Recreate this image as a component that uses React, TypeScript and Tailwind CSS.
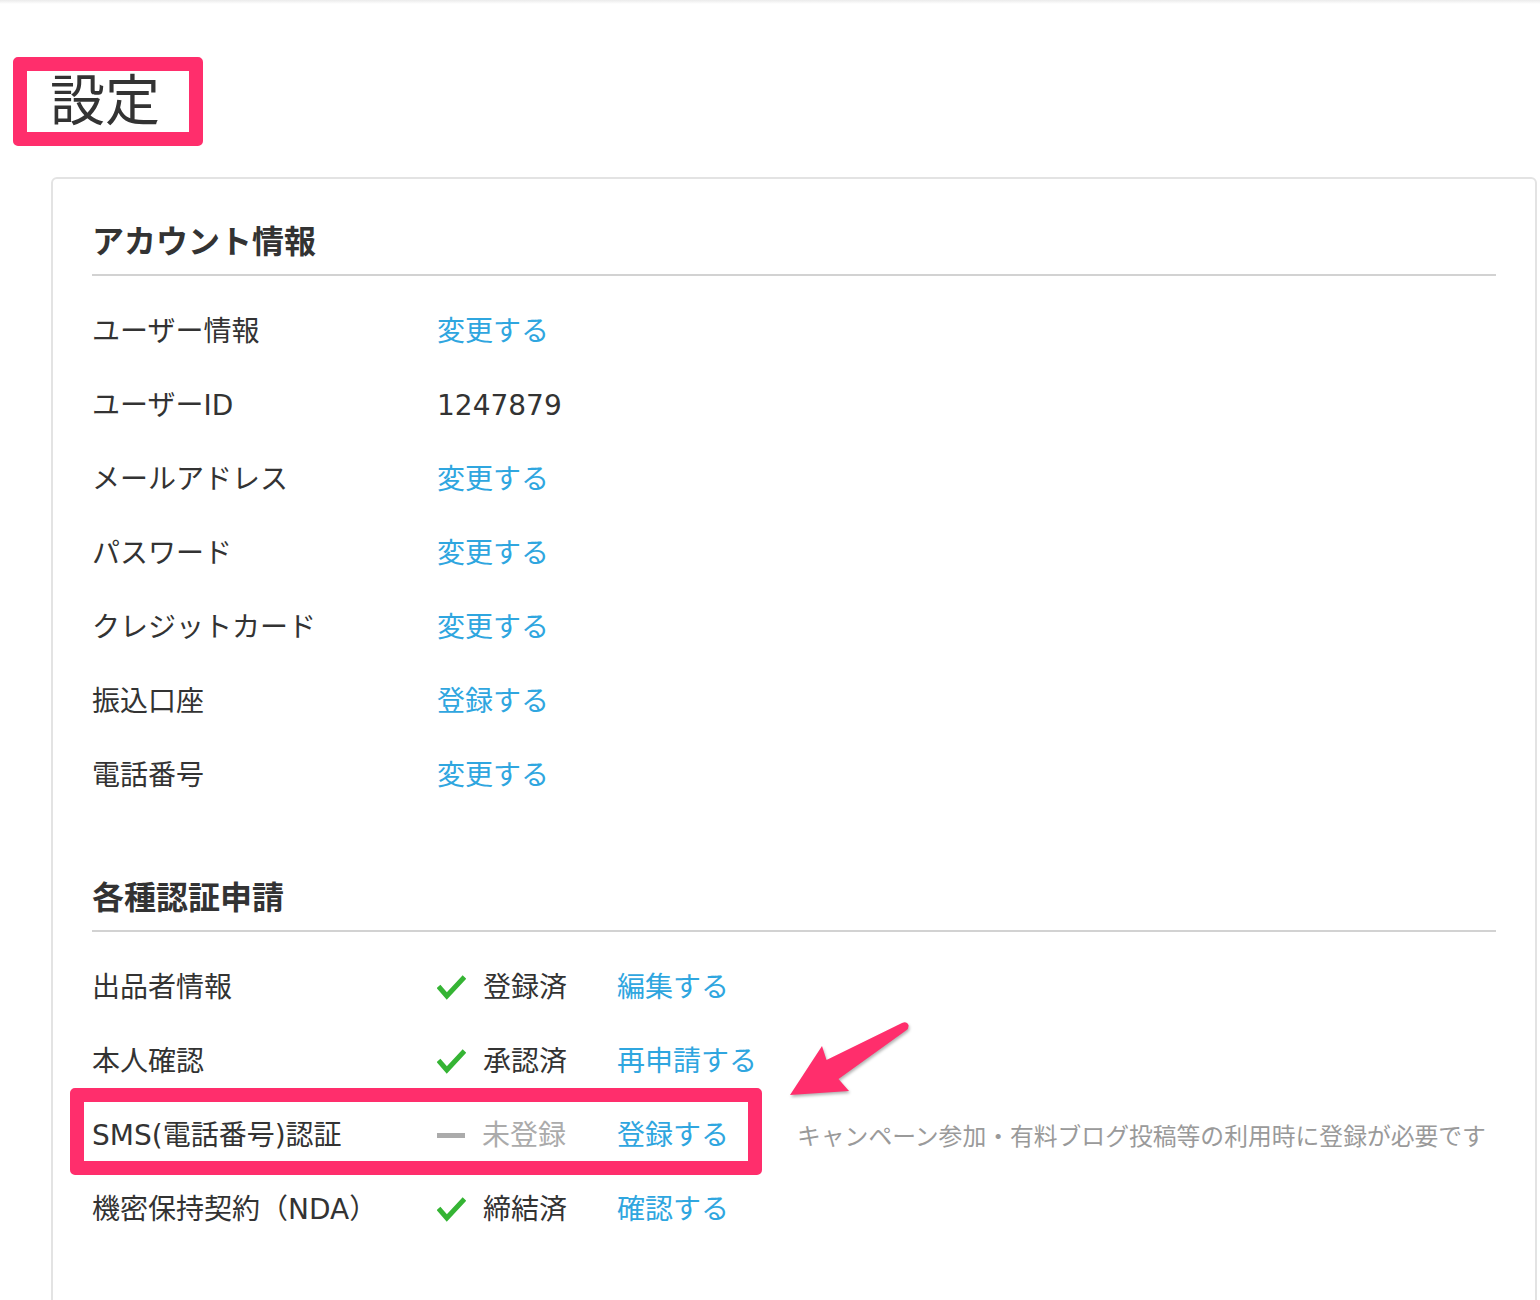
import React from 'react';

// Settings page: account info + verification requests, with pink annotation marks

type InfoRow = { label: string; value: string; link: boolean };

const accountRows: InfoRow[] = [
  { label: 'ユーザー情報', value: '変更する', link: true },
  { label: 'ユーザーID', value: '1247879', link: false },
  { label: 'メールアドレス', value: '変更する', link: true },
  { label: 'パスワード', value: '変更する', link: true },
  { label: 'クレジットカード', value: '変更する', link: true },
  { label: '振込口座', value: '登録する', link: true },
  { label: '電話番号', value: '変更する', link: true },
];

type AuthRow = { label: string; status: string; done: boolean; action: string; note?: string; marked?: boolean };

const authRows: AuthRow[] = [
  { label: '出品者情報', status: '登録済', done: true, action: '編集する' },
  { label: '本人確認', status: '承認済', done: true, action: '再申請する' },
  {
    label: 'SMS(電話番号)認証',
    status: '未登録',
    done: false,
    action: '登録する',
    note: 'キャンペーン参加・有料ブログ投稿等の利用時に登録が必要です',
    marked: true,
  },
  { label: '機密保持契約（NDA）', status: '締結済', done: true, action: '確認する' },
];

function CheckIcon() {
  return (
    <svg width="29" height="25" viewBox="0 0 29 25" className="shrink-0">
      <path d="M1.5 11.5 L9.8 21 L27.5 2" fill="none" stroke="#35b434" strokeWidth="5" strokeLinejoin="miter" />
    </svg>
  );
}

function Dash() {
  return <div className="h-[5px] w-[28px] shrink-0 bg-[#ababab]" />;
}

function SectionHeader({ title }: { title: string }) {
  return (
    <h2 className="border-b-2 border-[#d2d2d2] pb-[8px] pt-[1px] text-[32px] font-bold leading-[47px] text-[#333]">
      {title}
    </h2>
  );
}

function PointerArrow() {
  return (
    <svg
      width="126"
      height="80"
      viewBox="0 0 126 80"
      className="pointer-events-none absolute left-[696px] top-[-77px] drop-shadow-[1px_2px_1.5px_rgba(0,0,0,0.3)]"
    >
      <path
        d="M2 75 L34 26 L38.5 40 L114 3 Q119 1 120.5 5 Q121 8.5 118 10.5 L50.5 59 L61 71 Z"
        fill="#ff2e6c"
      />
    </svg>
  );
}

export default function App() {
  return (
    <div className="min-h-[1300px] bg-white font-['DejaVu_Sans','Noto_Sans_CJK_JP',sans-serif] text-[#333]">
      <div className="h-[4px] bg-gradient-to-b from-[#ebebeb] to-white" />

      {/* Title */}
      <div className="pl-[13px] pt-[53px]">
        <div className="inline-block rounded-[5px] border-[14px] border-[#ff2e6c] pl-[23px] pr-[29px] text-[55px] leading-[61px]">
          設定
        </div>
      </div>

      {/* Panel */}
      <div className="ml-[51px] mt-[31px] w-[1486px] rounded-[6px] border-2 border-[#e3e3e3] px-[39px] pb-[90px] pt-[39px]">
        <SectionHeader title="アカウント情報" />
        <div className="mt-[17px]">
          {accountRows.map((r) => (
            <div key={r.label} className="grid h-[74px] grid-cols-[345px_1fr] items-center pt-[3px] text-[28px]">
              <div>{r.label}</div>
              <div className={r.link ? 'text-[#2fa6df]' : 'text-[#333]'}>{r.value}</div>
            </div>
          ))}
        </div>

        <div className="mt-[63px]">
          <SectionHeader title="各種認証申請" />
        </div>
        <div className="mt-[17px]">
          {authRows.map((r) => (
            <div key={r.label} className="relative grid h-[74px] grid-cols-[345px_180px_180px_1fr] items-center pt-[3px] text-[28px]">
              <div>{r.label}</div>
              <div className="flex items-center gap-[17px]">
                {r.done ? <CheckIcon /> : <Dash />}
                <span className={r.done ? 'text-[#333]' : 'text-[#ababab]'}>{r.status}</span>
              </div>
              <div className="whitespace-nowrap text-[#2fa6df]">{r.action}</div>
              <div className="whitespace-nowrap pt-[4px] text-[23.8px] text-[#9a9a9a]">{r.note}</div>
              {r.marked && (
                <>
                  <div className="pointer-events-none absolute left-[-22px] top-[-9px] h-[87px] w-[692px] rounded-[5px] border-[14px] border-[#ff2e6c]" />
                  <PointerArrow />
                </>
              )}
            </div>
          ))}
        </div>
      </div>
    </div>
  );
}
